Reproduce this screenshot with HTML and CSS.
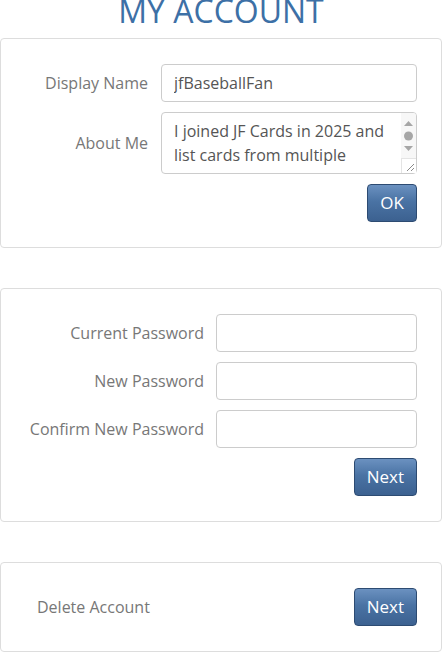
FILE: index.html
```html
<!DOCTYPE html>
<html>
<head>
<meta charset="utf-8">
<link rel="stylesheet" href="styles.css">
</head>
<body>
<h1 class="title">MY ACCOUNT</h1>

<section class="card">
  <div class="form-grid profile">
    <label class="label" for="dn">Display Name</label>
    <input class="field" id="dn" type="text" value="jfBaseballFan">
    <label class="label" for="about">About Me</label>
    <div class="area-wrap">
      <textarea class="field area" id="about">I joined JF Cards in 2025 and list cards from multiple sports and all eras. Always happy to trade with fellow collectors.</textarea>
      <div class="scrollbar" aria-hidden="true">
        <svg class="sb-arrows" width="15" height="44" viewBox="0 0 15 44">
          <polygon points="3,13 12,13 7.5,8" fill="#a6a6a6"/>
          <circle cx="7.5" cy="23" r="4.5" fill="#a6a6a6"/>
          <polygon points="3,33 12,33 7.5,38" fill="#a6a6a6"/>
        </svg>
        <div class="resizer">
          <svg width="14" height="14" viewBox="0 0 14 14">
            <line x1="12" y1="5" x2="5" y2="12" stroke="#8a8a8a" stroke-width="1"/>
            <line x1="12" y1="9" x2="9" y2="12" stroke="#8a8a8a" stroke-width="1"/>
          </svg>
        </div>
      </div>
    </div>
  </div>
  <div class="actions"><button class="btn">OK</button></div>
</section>

<section class="card">
  <div class="form-grid password">
    <label class="label" for="cp">Current Password</label>
    <input class="field" id="cp" type="password">
    <label class="label" for="np">New Password</label>
    <input class="field" id="np" type="password">
    <label class="label" for="cnp">Confirm New Password</label>
    <input class="field" id="cnp" type="password">
  </div>
  <div class="actions"><button class="btn">Next</button></div>
</section>

<section class="card delete">
  <span class="label delete-label">Delete Account</span>
  <button class="btn">Next</button>
</section>
</body>
</html>
```

FILE: styles.css
```css
html, body {
  margin: 0;
  padding: 0;
  background: #fff;
}

body {
  font-family: "Open Sans", "Liberation Sans", sans-serif;
  font-size: 16px;
  color: #555;
  overflow: hidden;
  height: 652px;
}

.title {
  margin: -5px 0 11px;
  font-size: 32px;
  line-height: 32px;
  font-weight: 400;
  color: #3d70a6;
  text-align: center;
}

.card {
  border: 1px solid #dddddd;
  border-radius: 4px;
  padding: 25px 24px 25px 25px;
  margin-bottom: 40px;
}

.form-grid {
  display: grid;
  row-gap: 10px;
  align-items: center;
}

.profile {
  grid-template-columns: 122px 1fr;
  column-gap: 13px;
}

.password {
  grid-template-columns: 178px 1fr;
  column-gap: 12px;
}

.label {
  color: #777777;
  text-align: right;
  font-size: 16px;
  line-height: 24px;
}

.field {
  box-sizing: border-box;
  height: 38px;
  border: 1px solid #cccccc;
  border-radius: 4px;
  padding: 6px 12px;
  font-family: "Open Sans", "Liberation Sans", sans-serif;
  font-size: 16px;
  color: #555;
  background: #fff;
  width: 100%;
  margin: 0;
  display: block;
}

.area-wrap {
  position: relative;
  height: 62px;
}

.area {
  height: 62px;
  line-height: 24px;
  padding: 6px 27px 4px 12px;
  resize: none;
  overflow: hidden;
}

.scrollbar {
  position: absolute;
  top: 1px;
  right: 1px;
  bottom: 1px;
  width: 15px;
  background: #f7f7f7;
  border-radius: 0 3px 3px 0;
  display: flex;
  flex-direction: column;
  justify-content: space-between;
}

.sb-arrows {
  display: block;
}

.resizer {
  width: 14px;
  height: 14px;
  border-top: 1px solid #e4e4e4;
  border-left: 1px solid #e4e4e4;
  background: #fff;
}

.resizer svg {
  display: block;
}

.actions {
  display: flex;
  justify-content: flex-end;
  margin-top: 10px;
}

.btn {
  box-sizing: border-box;
  height: 38px;
  padding: 0 12px;
  border: 1px solid #2d4b72;
  border-radius: 4px;
  background: linear-gradient(to bottom, #6b91c0 0%, #4a73a4 45%, #3c6190 100%);
  color: #fff;
  font-family: "Open Sans", "Liberation Sans", sans-serif;
  font-size: 17px;
  line-height: 22px;
  cursor: pointer;
}

.delete {
  display: flex;
  justify-content: space-between;
  align-items: center;
}

.delete-label {
  padding-left: 11px;
  text-align: left;
}
```
